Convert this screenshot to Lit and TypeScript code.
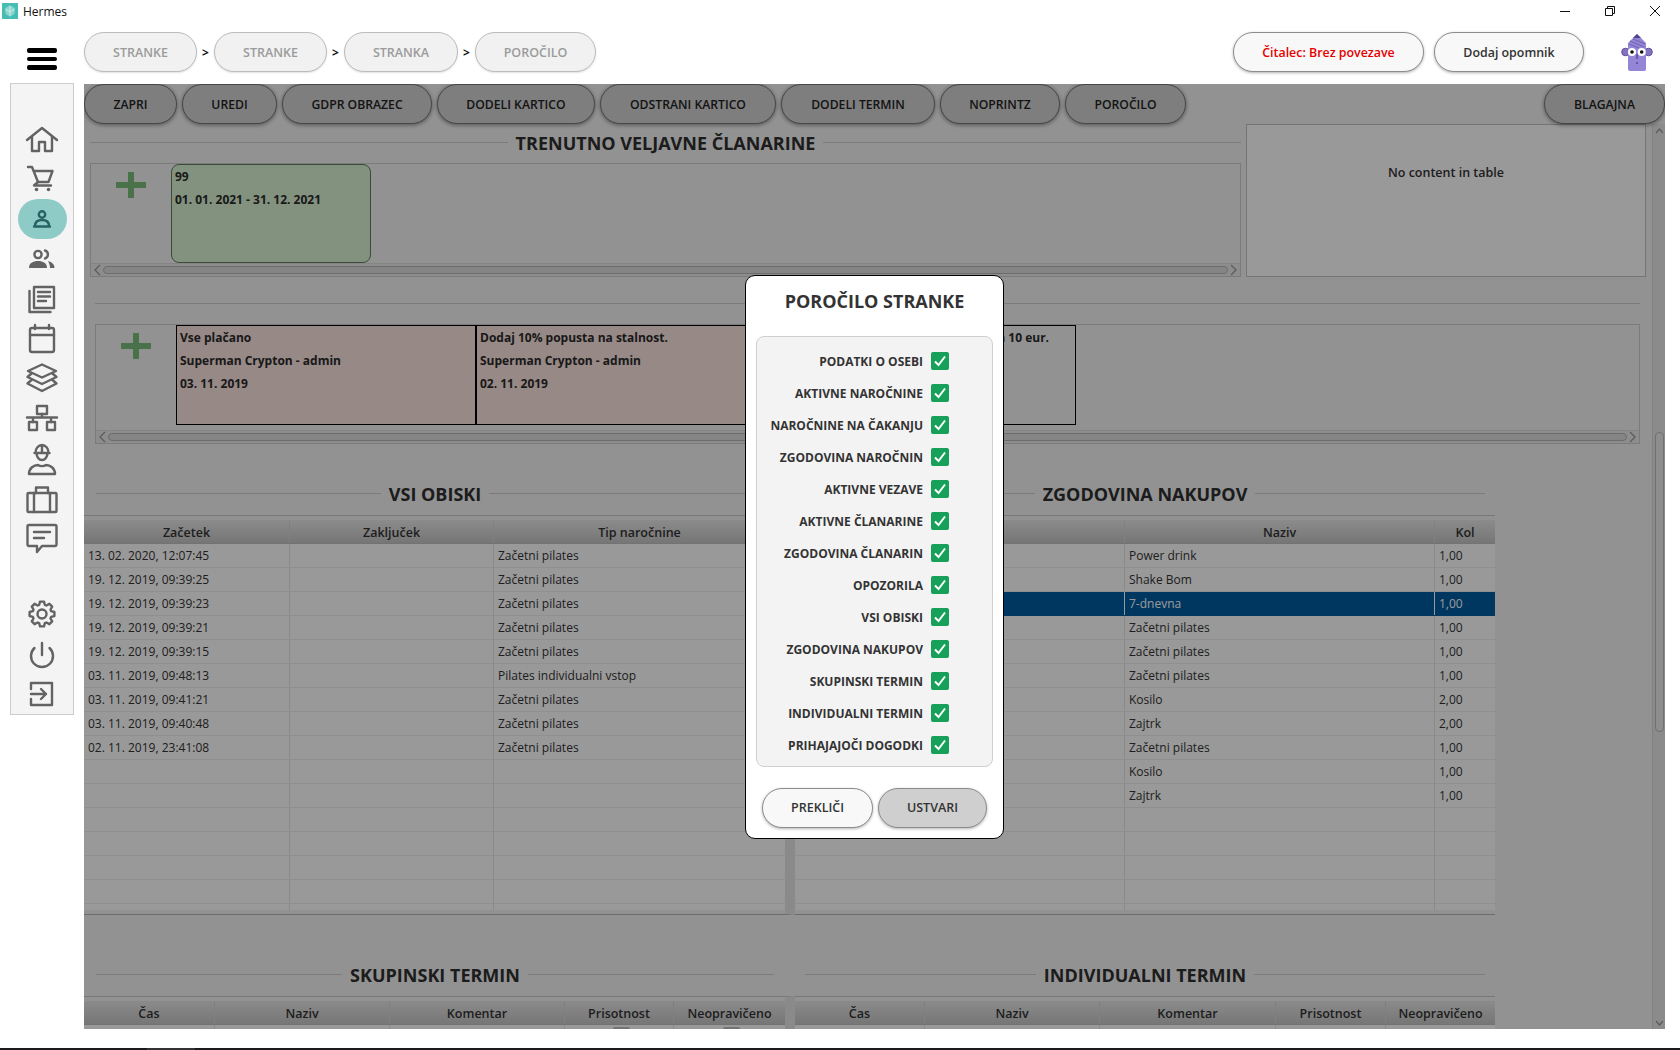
import { LitElement, html, css, svg } from 'lit';
import { customElement } from 'lit/decorators.js';

const gearPath = () => {
  // outline of a gear with 8 teeth, round centre 18,18
  const pts: string[] = [];
  for (let i = 0; i < 8; i++) {
    const a = (i * Math.PI) / 4 - Math.PI / 8;
    const step = Math.PI / 4;
    const p = (r: number, t: number) =>
      `${(18 + r * Math.cos(t)).toFixed(1)},${(18 + r * Math.sin(t)).toFixed(1)}`;
    pts.push(p(9.6, a + step * 0.12), p(12.6, a + step * 0.3), p(12.6, a + step * 0.7), p(9.6, a + step * 0.88));
  }
  return 'M' + pts.join(' L') + ' Z';
};

const icons = {
  home: svg`<path d="M3 19 18 7l15 12"/><path d="M8 15.500V30h7v-9h6v9h7V15.500"/>`,
  cart: svg`<path d="M4 6h4l6 15h10.500l4-11H9.500"/><path d="M14 21l-4 3.500h17"/><circle class="f" cx="12.500" cy="28.500" r="1.800"/><circle class="f" cx="24.500" cy="28.500" r="1.800"/>`,
  person: svg`<circle cx="18" cy="13.500" r="3.200"/><path d="M10 25.500h16M11 25c0-4 3-6 7-6s7 2 7 6"/>`,
  users: svg`<circle cx="14" cy="13.500" r="3.600"/><path class="f" d="M5 27c0-5 4-7 9-7s9 2 9 7z"/><path d="M21 9.500a4.200 4.200 0 0 1 0 8"/><path class="f" d="M24 20c3.500 1 6.500 3 6.500 7H26c0-3-1-5-2-7z"/>`,
  news: svg`<path d="M10 6h20v21H10z"/><path d="M5.500 10v21h21"/><path d="M14 11h12M14 15.500h12M14 20h8"/>`,
  calendar: svg`<rect x="6" y="7" width="24" height="24" rx="2"/><path d="M6 14h24M11 4v4M25 4v4"/>`,
  layers: svg`<path d="M18 3.500l14 6.500-14 6.500L4 10z"/><path d="M7.500 12.500l-4 3.500L18 23l14.500-7-4-3.500"/><path d="M7.500 19l-4 3.500L18 30l14.500-7.500-4-3.500"/>`,
  sitemap: svg`<path d="M13 5h10v8H13zM5 21h8v8H5zM23 21h8v8h-8z"/><path d="M18 13v3M3 16.500h30M9 17v4M27 17v4"/>`,
  worker: svg`<path d="M10.500 12h15M11.500 11.500a6.500 7.500 0 0 1 13 0M18 4v8M12.500 12a5.500 7 0 0 0 11 0"/><path d="M5 33c0-6 5-9 9-9 2 1.500 6 1.500 8 0 4 0 9 3 9 9z"/>`,
  briefcase: svg`<rect x="3.500" y="12" width="29" height="19" rx="1"/><path d="M12 12V6.500h12V12M10 12v19M26 12v19"/>`,
  chat: svg`<path d="M5 4h26a1.500 1.500 0 0 1 1.500 1.500v18a1.500 1.500 0 0 1-1.500 1.500H18l-5 6v-6H5a1.500 1.500 0 0 1-1.500-1.500v-18A1.500 1.500 0 0 1 5 4z"/><path d="M10 11h16M10 17h10"/>`,
  gear: svg`<path d=${gearPath()}/><circle cx="18" cy="18" r="4.500"/>`,
  power: svg`<path d="M10.500 12a11 11 0 1 0 15 0M18 7v12"/>`,
  logout: svg`<path d="M7 13V7h21v22H7v-6M7 18h15M17 13l5 5-5 5"/>`,
};

const navTop = ['home', 'cart', 'person', 'users', 'news', 'calendar', 'layers', 'sitemap', 'worker', 'briefcase', 'chat'];
const navBottom = ['gear', 'power', 'logout'];
const crumbs = [['STRANKE', 113], ['STRANKE', 113], ['STRANKA', 114], ['POROČILO', 121]];
const actions = [['ZAPRI', 93], ['UREDI', 95], ['GDPR OBRAZEC', 150], ['DODELI KARTICO', 158], ['ODSTRANI KARTICO', 176], ['DODELI TERMIN', 154], ['NOPRINTZ', 120], ['POROČILO', 121]];
const reportItems = [
  'PODATKI O OSEBI', 'AKTIVNE NAROČNINE', 'NAROČNINE NA ČAKANJU', 'ZGODOVINA NAROČNIN', 'AKTIVNE VEZAVE',
  'AKTIVNE ČLANARINE', 'ZGODOVINA ČLANARIN', 'OPOZORILA', 'VSI OBISKI', 'ZGODOVINA NAKUPOV',
  'SKUPINSKI TERMIN', 'INDIVIDUALNI TERMIN', 'PRIHAJAJOČI DOGODKI',
];

const visits = [
  ['13. 02. 2020, 12:07:45', '', 'Začetni pilates'],
  ['19. 12. 2019, 09:39:25', '', 'Začetni pilates'],
  ['19. 12. 2019, 09:39:23', '', 'Začetni pilates'],
  ['19. 12. 2019, 09:39:21', '', 'Začetni pilates'],
  ['19. 12. 2019, 09:39:15', '', 'Začetni pilates'],
  ['03. 11. 2019, 09:48:13', '', 'Pilates individualni vstop'],
  ['03. 11. 2019, 09:41:21', '', 'Začetni pilates'],
  ['03. 11. 2019, 09:40:48', '', 'Začetni pilates'],
  ['02. 11. 2019, 23:41:08', '', 'Začetni pilates'],
];
const purchases = [
  ['', 'Power drink', '1,00'],
  ['', 'Shake Bom', '1,00'],
  ['', '7-dnevna', '1,00'],
  ['', 'Začetni pilates', '1,00'],
  ['', 'Začetni pilates', '1,00'],
  ['', 'Začetni pilates', '1,00'],
  ['', 'Kosilo', '2,00'],
  ['', 'Zajtrk', '2,00'],
  ['', 'Začetni pilates', '1,00'],
  ['', 'Kosilo', '1,00'],
  ['', 'Zajtrk', '1,00'],
];
const notes = [
  ['Vse plačano', 'Superman Crypton - admin', '03. 11. 2019'],
  ['Dodaj 10% popusta na stalnost.', 'Superman Crypton - admin', '02. 11. 2019'],
  ['Stranki se je znižala cena članarine za 10 eur.', '', ''],
];

const plus = html`<svg class="plus" width="30" height="26" viewBox="0 0 30 26"><path d="M12 0h6v10h12v6H18v10h-6V16H0v-6h12z"/></svg>`;
const chevron = (d: string) => html`<svg class="chev" width="8" height="12" viewBox="0 0 8 12"><path d=${d}/></svg>`;

@customElement('app-root')
export class AppRoot extends LitElement {
  static styles = css`
    :host {
      display: block;
      width: 1680px;
      height: 1050px;
      overflow: hidden;
      background: #fff;
      font-family: 'Open Sans', 'Noto Sans', sans-serif;
      color: #333;
    }
    * { box-sizing: border-box; }

    .titlebar { height: 22px; display: flex; align-items: center; padding-left: 2px; font-size: 12px; color: #111; }
    .titlebar .logo { margin-right: 5px; }
    .winctl { margin-left: auto; display: flex; align-items: center; padding-right: 20px; gap: 35px; }
    .winctl svg { display: block; fill: none; stroke: #111; stroke-width: 1; }

    .shell { display: grid; grid-template-columns: 84px 1596px; grid-template-rows: 62px 945px; }
    .burger { display: flex; flex-direction: column; gap: 4px; padding: 26px 0 0 27px; }
    .burger i { display: block; width: 30px; height: 4.500px; border-radius: 2px; background: #000; }

    .topnav { display: flex; align-items: center; padding-top: 10px; height: 50px; padding-right: 27px; }
    .crumb {
      height: 40px; border-radius: 20px; border: 1px solid #bcbcbc; background: #f1f1f1;
      display: flex; align-items: center; justify-content: center;
      font-size: 12.500px; font-weight: 600; color: #9b9b9b; box-shadow: 0 1px 2px rgba(0,0,0,.12);
    }
    .sep { width: 17px; text-align: center; font-size: 12px; font-weight: 700; color: #111; }
    .pill {
      height: 40px; border-radius: 20px; border: 1px solid #8c8c8c; background: #f8f8f8;
      display: flex; align-items: center; justify-content: center;
      font-size: 12.400px; font-weight: 600; color: #333; box-shadow: 0 1px 3px rgba(0,0,0,.3);
    }
    .reader { width: 191px; margin-left: auto; color: #e60000; }
    .remind { width: 150px; margin-left: 10px; }
    .mascot { margin-left: 37px; display: block; }

    .sidebar {
      margin: -1px 0 0 10px; width: 64px; height: 632px; background: #f4f4f4; border: 1px solid #ccc;
      display: flex; flex-direction: column; align-items: center; padding-top: 35px;
    }
    .nav { width: 49px; height: 40px; flex: none; display: flex; align-items: center; justify-content: center; border-radius: 20px; }
    .nav svg { display: block; fill: none; stroke: #636363; stroke-width: 2.400; stroke-linejoin: round; stroke-linecap: round; }
    .nav svg .f { fill: #636363; stroke: none; }
    .nav.active { background: #8ecbc7; }
    .nav.active svg { stroke: #2a6264; }
    .gapnav { height: 35px; flex: none; }

    .main { position: relative; height: 945px; overflow: hidden; background: #f4f4f4; width: 1581px; }
    .overlay {
      position: absolute; inset: 0; background: rgba(0,0,0,.4);
      display: flex; align-items: center; justify-content: center;
    }
    .toolbar { display: flex; gap: 5px; height: 40px; position: relative; }
    .act {
      height: 40px; border-radius: 20px; border: 1px solid #777; background: #d2d2d2;
      display: flex; align-items: center; justify-content: center; font-size: 12.200px; font-weight: 600; color: #222;
      box-shadow: 0 1px 4px rgba(0,0,0,.45);
    }
    .act.end { margin-left: auto; }

    .scroller { display: flex; height: 905px; }
    .content { width: 1568px; }
    .vbar { width: 13px; border-left: 1px solid #d8d8d8; background: #e8e8e8; display: flex; flex-direction: column; align-items: center; }
    .vbar .up { height: 12px; margin-top: 2px; }
    .vbar .thumb { width: 9px; height: 300px; margin-top: 294px; border: 1px solid #bbb; border-radius: 4px; background: #ececec; }
    .vbar .down { margin-top: auto; height: 10px; }
    .chev { display: block; fill: none; stroke: #999; stroke-width: 1.300; }

    .sec { display: flex; align-items: center; gap: 8px; height: 26px; font-size: 18px; font-weight: 700; color: #2f2f2f; }
    .sec::before, .sec::after { content: ''; flex: 1; height: 1px; background: #cdcdcd; transform: translateY(-1px); }

    .top { display: grid; grid-template-columns: 1162px 400px; height: 153px; }
    .top-left { padding: 6px 5px 0 6px; }
    .empty {
      border: 1px solid #c4c4c4; background: #fff; padding-top: 39px; text-align: center;
      font-size: 12.500px; font-weight: 600; color: #333;
    }
    .box { border: 1px solid #cdcdcd; display: flex; flex-direction: column; }
    .box.first { height: 114px; margin-top: 7px; }
    .box.second { height: 120px; margin-top: 7px; }
    .strip { flex: 1; display: flex; min-height: 0; }
    .adder { width: 80px; flex: none; display: flex; justify-content: center; padding-top: 8px; }
    .plus { display: block; fill: #7abc7c; }
    .card {
      width: 200px; background: #daf3d4; border: 1px solid #5f7d5f; border-radius: 8px;
      padding: 0 3px; font-size: 12px; font-weight: 700; color: #2b2b2b; line-height: 23px;
    }
    .note {
      width: 300px; height: 100px; padding: 0 3px; background: #fbe4e0; border: 1px solid #000;
      font-size: 12px; font-weight: 700; color: #2b2b2b; line-height: 23px; white-space: nowrap; overflow: hidden;
    }
    .note.plain { background: transparent; }
    .hbar { height: 13px; flex: none; display: flex; align-items: center; gap: 1px; padding: 0 3px; background: #ececec; border-top: 1px solid #dcdcdc; }
    .hbar .thumb { flex: 1; height: 8px; border: 1px solid #b4b4b4; border-radius: 4px; background: #dedede; }

    .second-wrap { padding: 14px 12px 0 11px; }
    .cols { display: grid; grid-template-columns: 711px 700px; }
    .cols.visits { margin-top: 37px; }
    .cols.terms { margin-top: 47px; }
    .col-title { padding: 0 21px 8px 12px; }
    .col-title.right { padding: 0 10px 8px 10px; }

    .table { border-top: 1px solid #c8c8c8; border-bottom: 1px solid #b5b5b5; height: 400px; padding-top: 4px; }
    .table.cut { height: auto; border-bottom: none; }
    .table.left { border-right: 10px solid #e6e6e6; }
    .thead, .trow { display: grid; }
    .thead {
      height: 24px; padding-top: 1px; background: linear-gradient(#e8e8e8, #c5c5c5); border-bottom: 1px solid #c0c0c0;
      font-size: 12.500px; font-weight: 600; color: #333;
    }
    .thead div { display: flex; align-items: center; justify-content: center; border-right: 1px solid #d4d4d4; }
    .thead div:last-child { border-right: none; }
    .tbody { height: 366px; overflow: hidden; background: #fff; }
    .table.cut .tbody { height: 24px; }
    .trow { height: 24px; border-bottom: 1px solid #eee; font-size: 12px; color: #333; line-height: 23px; }
    .trow div { padding-left: 4px; border-right: 1px solid #e6e6e6; white-space: nowrap; overflow: hidden; }
    .trow div:last-child { border-right: none; }
    .trow.sel { background: #005ca0; color: #fff; border-bottom-color: #005ca0; }
    .trow.sel div { border-right-color: #fff; }
    .nub { width: 17px; height: 10px; margin: 2px auto 0; border-radius: 2px; background: #c0c0c0; }

    .modal {
      width: 259px; height: 564px; background: #fff; border: 1px solid #000; border-radius: 10px;
      padding: 0 10px 10px; display: flex; flex-direction: column;
    }
    .modal h2 { margin: 0; height: 61px; padding-bottom: 9px; display: flex; align-items: center; justify-content: center; font-size: 18px; font-weight: 700; color: #333; }
    .list {
      height: 431px; background: #f3f3f3; border: 1px solid #cfcfcf; border-radius: 8px;
      padding: 15px 0 0; display: flex; flex-direction: column; gap: 14px;
    }
    .item { display: flex; align-items: center; justify-content: flex-end; height: 18px; padding-right: 43px; gap: 8px; font-size: 12px; font-weight: 700; color: #333; white-space: nowrap; }
    .check { width: 18px; height: 18px; border-radius: 2px; background: #16a05a; display: block; flex: none; fill: none; stroke: #fff; stroke-width: 2; }
    .modal-actions { display: flex; gap: 5px; padding: 21px 0 0 6px; }
    .modal-actions .pill { font-size: 12.500px; }
    .cancel { width: 111px; }
    .create { width: 109px; background: #cfcfcf; }

    .task { height: 2px; margin-top: 19px; background: #1a1a1a; padding-left: 147px; }
    .task i { display: block; width: 48px; height: 2px; background: #333; }
  `;

  private icon(name: string) {
    return html`<svg width="36" height="36" viewBox="0 0 36 36">${(icons as any)[name]}</svg>`;
  }

  private table(cols: number[], head: string[], rows: any[][], sel: number, cut: boolean, left: boolean) {
    const tpl = cols.map((c) => c + 'px').join(' ');
    const filled = cut ? rows : [...rows, ...Array(16 - rows.length).fill(head.map(() => ''))];
    return html`
      <div class="table ${cut ? 'cut' : ''} ${left ? 'left' : ''}">
        <div class="thead" style="grid-template-columns:${tpl}">${head.map((h) => html`<div>${h}</div>`)}</div>
        <div class="tbody">
          ${filled.map((r, i) => html`
            <div class="trow ${i === sel ? 'sel' : ''}" style="grid-template-columns:${tpl}">
              ${r.map((c) => html`<div>${c}</div>`)}
            </div>`)}
        </div>
      </div>`;
  }

  render() {
    const nub = html`<div class="nub"></div>`;
    return html`
      <div class="titlebar">
        <svg class="logo" width="16" height="16" viewBox="0 0 16 16"><rect width="16" height="16" fill="#45bdb4"/><circle cx="8" cy="8" r="5" fill="#8ad6cf"/><path d="M8 2.500v11M3.500 6l4.500 3 4.500-3" fill="none" stroke="#c9ece8"/></svg>
        Hermes
        <div class="winctl">
          <svg width="10" height="10" viewBox="0 0 10 10"><path d="M0 5.500h10"/></svg>
          <svg width="10" height="10" viewBox="0 0 10 10"><path d="M.5 2.500h7v7h-7zM2.500 2.500v-2h7v7h-2"/></svg>
          <svg width="10" height="10" viewBox="0 0 10 10"><path d="M0 0l10 10M10 0L0 10"/></svg>
        </div>
      </div>
      <div class="shell">
        <div class="burger"><i></i><i></i><i></i></div>
        <div class="topnav">
          ${crumbs.map((c, i) => html`
            ${i ? html`<span class="sep">&gt;</span>` : ''}
            <div class="crumb" style="width:${c[1]}px">${c[0]}</div>`)}
          <div class="pill reader">Čitalec: Brez povezave</div>
          <div class="pill remind">Dodaj opomnik</div>
          <svg class="mascot" width="32" height="38" viewBox="0 0 32 38">
            <circle cx="4.500" cy="19" r="3.800" fill="#8473c4" stroke="#5d5096"/><circle cx="27.500" cy="19" r="3.800" fill="#8473c4" stroke="#5d5096"/>
            <path d="M7 10l9-9 9 9v26a2 2 0 0 1-2 2H9a2 2 0 0 1-2-2z" fill="#9485d6"/>
            <path d="M12 5l4-4 4 4z" fill="#4f4390"/>
            <path d="M9 8l14 6M12 6l12 5M8 11l10 4" stroke="#6f60b0" fill="none"/>
            <circle cx="11" cy="19" r="4" fill="#fff"/><circle cx="20.700" cy="19" r="4" fill="#fff"/>
            <circle cx="11" cy="19" r="1.800" fill="#111"/><circle cx="20.700" cy="19" r="1.800" fill="#111"/>
            <path d="M16 21v5M15 30h2" stroke="#3a3170"/>
          </svg>
        </div>
        <div class="sidebar">
          ${navTop.map((n) => html`<div class="nav ${n === 'person' ? 'active' : ''}">${this.icon(n)}</div>`)}
          <div class="gapnav"></div>
          ${navBottom.map((n) => html`<div class="nav">${this.icon(n)}</div>`)}
        </div>
        <div class="main">
          <div class="toolbar">
            ${actions.map((a) => html`<div class="act" style="width:${a[1]}px">${a[0]}</div>`)}
            <div class="act end" style="width:121px">BLAGAJNA</div>
          </div>
          <div class="scroller">
            <div class="content">
              <div class="top">
                <div class="top-left">
                  <div class="sec">TRENUTNO VELJAVNE ČLANARINE</div>
                  <div class="box first">
                    <div class="strip">
                      <div class="adder">${plus}</div>
                      <div class="card">99<br />01. 01. 2021 - 31. 12. 2021</div>
                    </div>
                    <div class="hbar">${chevron('M6 1 1 6l5 5')}<div class="thumb"></div>${chevron('M2 1l5 5-5 5')}</div>
                  </div>
                </div>
                <div class="empty">No content in table</div>
              </div>
              <div class="second-wrap">
                <div class="sec"></div>
                <div class="box second">
                  <div class="strip">
                    <div class="adder">${plus}</div>
                    ${notes.map((n, i) => html`
                      <div class="note ${i === 2 ? 'plain' : ''}">${n[0]}${i < 2 ? html`<br />${n[1]}<br />${n[2]}` : ''}</div>`)}
                  </div>
                  <div class="hbar">${chevron('M6 1 1 6l5 5')}<div class="thumb"></div>${chevron('M2 1l5 5-5 5')}</div>
                </div>
              </div>
              <div class="cols visits">
                <div>
                  <div class="col-title"><div class="sec">VSI OBISKI</div></div>
                  ${this.table([206, 204, 291], ['Začetek', 'Zaključek', 'Tip naročnine'], visits, -1, false, true)}
                </div>
                <div>
                  <div class="col-title right"><div class="sec">ZGODOVINA NAKUPOV</div></div>
                  ${this.table([330, 310, 60], ['Datum', 'Naziv', 'Kol'], purchases, 2, false, false)}
                </div>
              </div>
              <div class="cols terms">
                <div>
                  <div class="col-title"><div class="sec">SKUPINSKI TERMIN</div></div>
                  ${this.table([131, 175, 175, 109, 111], ['Čas', 'Naziv', 'Komentar', 'Prisotnost', 'Neopravičeno'], [['', '', '', nub, nub]], -1, true, true)}
                </div>
                <div>
                  <div class="col-title right"><div class="sec">INDIVIDUALNI TERMIN</div></div>
                  ${this.table([130, 175, 176, 110, 109], ['Čas', 'Naziv', 'Komentar', 'Prisotnost', 'Neopravičeno'], [['', '', '', '', '']], -1, true, false)}
                </div>
              </div>
            </div>
            <div class="vbar">
              <div class="up">${chevron('M1 7l3.500-4L8 7')}</div>
              <div class="thumb"></div>
              <div class="down">${chevron('M1 2l3.500 4L8 2')}</div>
            </div>
          </div>
          <div class="overlay">
            <div class="modal">
              <h2>POROČILO STRANKE</h2>
              <div class="list">
                ${reportItems.map((r) => html`
                  <div class="item">${r}<svg class="check" viewBox="0 0 18 18"><path d="M4 9.500l3.500 3.500L14 4.500"/></svg></div>`)}
              </div>
              <div class="modal-actions">
                <div class="pill cancel">PREKLIČI</div>
                <div class="pill create">USTVARI</div>
              </div>
            </div>
          </div>
        </div>
      </div>
      <div class="task"><i></i></div>
    `;
  }
}

declare global {
  interface HTMLElementTagNameMap {
    'app-root': AppRoot;
  }
}
